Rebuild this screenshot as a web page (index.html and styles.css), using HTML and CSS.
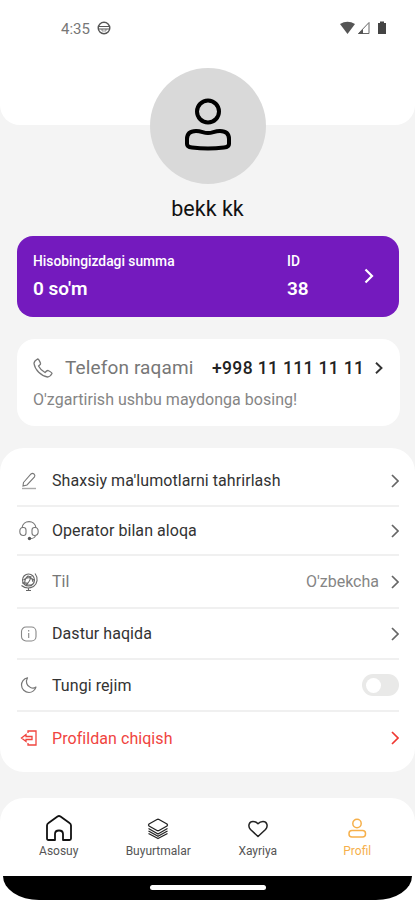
FILE: index.html
```html
<!DOCTYPE html>
<html lang="uz">
<head>
<meta charset="utf-8">
<meta name="viewport" content="width=device-width, initial-scale=1">
<title>Profil</title>
<link rel="stylesheet" href="styles.css">
</head>
<body>
<div class="screen">
  <header class="top">
    <div class="status">
      <span class="clock">4:35</span>
      <svg class="globe" width="14" height="14" viewBox="0 0 14 14" fill="none" stroke="#555" stroke-width="1.4"><circle cx="7" cy="7" r="5.8"/><path d="M1 5.500h12M1 8h12" stroke-width="1.100"/><path d="M5 8v2h4V8" stroke-width=".6"/></svg>
      <svg class="signals" width="47" height="14" viewBox="0 0 47 14"><path d="M0 3Q7.500-1.500 15 3L7.500 13Z" fill="#555"/><path d="M18.500 12.500H29V1.500Z" fill="none" stroke="#666"/><path d="M18 13l5-5v5z" fill="#555"/><path d="M38 2h2V.5h4V2h2v11h-8z" fill="#444"/></svg>
    </div>
  </header>
  <div class="avatar">
    <svg width="50" height="54" viewBox="0 0 50 54" fill="none" stroke="#000" stroke-width="4"><circle cx="25" cy="13.500" r="11"/><path d="M4 46V41Q4 33 13 33C19 33 20 35 25 35S31 33 37 33Q46 33 46 41V46Q46 49 41 49.500Q25 51.500 9 49.500Q4 49 4 46Z"/></svg>
  </div>
  <h1 class="name"><span>bekk kk</span></h1>

  <section class="balance">
    <div class="sum"><span class="label">Hisobingizdagi summa</span><strong>0 so'm</strong></div>
    <div class="id"><span class="label">ID</span><strong>38</strong></div>
    <svg class="arrow-big" width="10" height="16" viewBox="0 0 10 16" fill="none" stroke="#fff" stroke-width="2.200"><path d="M1.500 1.500L8 8L1.500 14.500"/></svg>
  </section>

  <section class="phone">
    <div class="phone-row">
      <svg width="20" height="20" viewBox="0 0 20 20" fill="none" stroke="#777" stroke-width="1.300" stroke-linejoin="round"><path d="M4.500 1Q1 3 1 5.500C2 12 8 18 14.500 19Q17 19 19 15.500Q19 14.500 15 12.500Q14 12.300 12 14.500Q7.500 12 5.500 8Q8 6.300 7.500 5.300Q6 1 4.500 1Z"/></svg>
      <span class="phone-title">Telefon raqami</span>
      <span class="number">+998 11 111 11 11</span>
      <svg class="phone-arrow" width="8" height="12" viewBox="0 0 8 12" fill="none" stroke="#333" stroke-width="1.900"><path d="M1 .8L6.500 6L1 11.200"/></svg>
    </div>
    <p class="hint"><span>O'zgartirish ushbu maydonga bosing!</span></p>
  </section>

  <main class="menu">
    <div class="row r1">
      <svg class="icon" width="20" height="20" viewBox="0 0 20 20" fill="none" stroke="#777" stroke-width="1.100"><path d="M4.500 11.500L12 3Q13.500 1.800 15 3T15.500 6L8 14L4 15Z"/><path d="M3 17.500h14" stroke="#aaa" stroke-width="1.400"/></svg>
      <span class="t">Shaxsiy ma'lumotlarni tahrirlash</span>
      <svg class="chev" width="8" height="14" viewBox="0 0 8 14"><path d="M1 1l6 6-6 6"/></svg>
    </div>
    <div class="row r2">
      <svg class="icon" width="20" height="20" viewBox="0 0 20 20" fill="none" stroke="#777" stroke-width="1.100"><path d="M3 7C4-1.500 16-1.500 17 7M3.500 6.500h1q2.500 0 2.500 2.500v3q0 2.500-2.500 2.500Q.8 14.500.8 10.500T4 6.500M16.500 6.500h-1q-2.500 0-2.500 2.500v3q0 2.500 2.500 2.500 3.700 0 3.700-4T16 6.500M16.500 14.500Q16 17.500 11 17.500"/><circle cx="10.500" cy="17.500" r="1.700" fill="#555" stroke="none"/></svg>
      <span class="t">Operator bilan aloqa</span>
      <svg class="chev" width="8" height="14" viewBox="0 0 8 14"><path d="M1 1l6 6-6 6"/></svg>
    </div>
    <div class="row r3">
      <svg class="icon" width="20" height="20" viewBox="0 0 20 20" fill="none" stroke="#666" stroke-width="1.100"><circle cx="9.500" cy="8" r="6"/><path d="M6 12q-1-5 3-8 4 1 5 6M4.500 8Q9.500 3.500 15 8M7 13q4-3 5-9M16 1.500C19.500 6 18.500 11.500 14.500 14.500Q8 18 2.500 13.500M9.500 16v3M7 18.500h5M3 11h5v2h5"/></svg>
      <span class="t t3">Til</span><span class="lang">O'zbekcha</span>
      <svg class="chev" width="8" height="14" viewBox="0 0 8 14"><path d="M1 1l6 6-6 6"/></svg>
    </div>
    <div class="row r4">
      <svg class="icon" width="20" height="20" viewBox="0 0 20 20" fill="none" stroke="#888" stroke-width="1.100"><rect x="2.500" y="3" width="14.500" height="14" rx="4.500"/><path d="M9.700 9v5M9.700 6v1.500"/></svg>
      <span class="t">Dastur haqida</span>
      <svg class="chev" width="8" height="14" viewBox="0 0 8 14"><path d="M1 1l6 6-6 6"/></svg>
    </div>
    <div class="row r5">
      <svg class="icon" width="20" height="20" viewBox="0 0 20 20" fill="none" stroke="#777" stroke-width="1.200" stroke-linejoin="round"><path d="M8.500 2.800C4.500 3.500 2.500 7 2.500 10C2.500 14 6 17.500 10 17.500C13 17.500 16.500 15 17 12Q14.500 14 11.500 12.500C7.500 11 6.500 6.500 8.500 2.800Z"/></svg>
      <span class="t">Tungi rejim</span>
      <span class="toggle"><i></i></span>
    </div>
    <div class="row r6">
      <svg class="icon" width="20" height="20" viewBox="0 0 20 20" fill="none" stroke="#f0443e" stroke-width="1.300"><path d="M9 5V3h8v14H9v-2M7 6.500L2.500 10L7 13.500v-2h6v-3H7Z"/></svg>
      <span class="t">Profildan chiqish</span>
      <svg class="chev" width="8" height="14" viewBox="0 0 8 14"><path d="M1 1l6 6-6 6"/></svg>
    </div>
  </main>

  <nav class="tabs">
    <div class="tab">
      <svg width="28" height="28" viewBox="0 0 28 28" fill="none" stroke="#111" stroke-width="1.800" stroke-linejoin="round"><path d="M2 11.500Q2 10 3.500 9L12.500 2.500Q14 1.500 15.500 2.500L24.500 9Q26 10 26 11.500V24.500Q26 26 24.500 26H18V20Q18 16.500 14 16.500T10 20V26H3.500Q2 26 2 24.500Z"/></svg>
      <span>Asosuy</span>
    </div>
    <div class="tab">
      <svg width="28" height="28" viewBox="0 0 28 28" fill="none" stroke="#222" stroke-width="1.300" stroke-linejoin="round"><path d="M13 5.500Q14 5 15 5.500L23 10Q24 11 23 12L15 16.500Q14 17 13 16.500L5 12Q4 11 5 10ZM4.500 14.500L14 20L23.500 14.500M4.500 17L14 22.300L23.500 17M4.500 19.500L14 24.500L23.500 19.500"/></svg>
      <span>Buyurtmalar</span>
    </div>
    <div class="tab">
      <svg width="28" height="28" viewBox="0 0 28 28" fill="none" stroke="#222" stroke-width="1.500" stroke-linejoin="round"><path d="M14 22.500L6.500 15.500C3.500 12 5 7.500 9 7.500Q12 7.500 14 9.800Q16 7.500 19 7.500C23 7.500 24.500 12 21.500 15.500Z"/></svg>
      <span>Xayriya</span>
    </div>
    <div class="tab active">
      <svg width="28" height="28" viewBox="0 0 28 28" fill="none" stroke="#f6b04b" stroke-width="1.500"><circle cx="14" cy="9.500" r="4.200"/><rect x="6" y="16.500" width="16.500" height="6.500" rx="3"/></svg>
      <span>Profil</span>
    </div>
  </nav>
  <footer class="gesture"><i></i></footer>
</div>
</body>
</html>
```
FILE: styles.css
```css
* { box-sizing: border-box; }
body { margin: 0; background: #fff; font-family: Roboto, "Liberation Sans", sans-serif; color: #222; }
svg { display: block; flex: none; }
.screen { width: 415px; height: 900px; background: #f4f4f4; display: flex; flex-direction: column; overflow: hidden; }
.screen > * { flex: none; }
.top { height: 125px; background: #fff; border-radius: 0 0 20px 20px; padding-top: 14px; }
.status { display: flex; align-items: center; height: 28px; padding: 0 28px 0 61px; }
.clock { font-size: 15px; color: #777; width: 30px; white-space: nowrap; padding-top: 1px; }
.globe { margin-left: 6px; }
.signals { margin-left: auto; }
.avatar { width: 116px; height: 116px; border-radius: 50%; background: #d9d9d9; margin: -57px 0 0 150px; display: flex; justify-content: center; padding-top: 30px; position: relative; }
.name { margin: 10px 0 0; height: 30px; line-height: 30px; text-align: center; font-size: 21.500px; font-weight: 400; color: #111; }
.balance { margin: 12px 16px 0 17px; height: 81px; border-radius: 16px; background: #741abe; color: #fff; display: flex; padding: 16px 25px 0 16px; }
.balance .sum { width: 254px; }
.label { display: block; font-size: 13.800px; line-height: 18px; font-weight: 500; white-space: nowrap; }
.balance strong { display: block; font-size: 19px; line-height: 24px; font-weight: 600; margin-top: 7px; }
.arrow-big { margin: 16px 0 0 auto; }
.phone { margin: 22px 15px 0 17px; height: 87px; background: #fff; border-radius: 18px; padding: 14px 17px 0 16px; }
.phone-row { display: flex; align-items: center; height: 29px; }
.phone-title { font-size: 19px; letter-spacing: .13px; color: #777; margin-left: 12px; white-space: nowrap; width: 147px; }
.number { font-size: 17.500px; letter-spacing: .35px; font-weight: 500; color: #222; white-space: nowrap; }
.phone-arrow { margin-left: auto; }
.hint { margin: 6px 0 0; font-size: 16px; letter-spacing: .03px; line-height: 24px; color: #858585; white-space: nowrap; }
.menu { margin-top: 22px; height: 324px; background: #fff; border-radius: 24px; padding: 8px 16px 0 17px; }
.row { display: flex; align-items: center; border-bottom: 2px solid #f0f0f0; padding-left: 2px; }
.r1 { height: 51px; }
.r2 { height: 49px; }
.r3 { height: 53px; }
.r4 { height: 51px; }
.r5 { height: 52px; }
.r6 { height: 52px; border: 0; }
.icon { margin-right: 13px; }
.t { font-size: 16px; letter-spacing: .06px; white-space: nowrap; color: #333; }
.t3 { color: #777; }
.r6 .t { color: #f0443e; }
.chev { margin-left: auto; fill: none; stroke: #666; stroke-width: 1.700; }
.r6 .chev { stroke: #ef3832; }
.lang { margin-left: auto; font-size: 16px; color: #858585; }
.lang + .chev { margin-left: 12px; }
.toggle { margin-left: auto; width: 37px; height: 22px; border-radius: 11px; background: #e9e9e8; padding: 3.500px; }
.toggle i { display: block; width: 15px; height: 15px; border-radius: 50%; background: #fff; }
.tabs { margin-top: 26px; height: 78px; background: #fff; border-radius: 24px 24px 0 0; display: flex; padding: 16px 8px 0 9px; }
.tab { flex: 1; display: flex; flex-direction: column; align-items: center; font-size: 12px; line-height: 16px; color: #555; }
.tab span { margin-top: 1px; }
.active { color: #f6b04b; }
.gesture { height: 24px; background: #000; border-radius: 0 0 36px 36px / 0 0 24px 24px; margin: 0 3px; display: flex; justify-content: center; padding-top: 9px; box-shadow: 0 0 0 30px #fff; clip-path: inset(0 -3px); }
.gesture i { width: 116px; height: 5px; border-radius: 3px; background: #fff; }
```
